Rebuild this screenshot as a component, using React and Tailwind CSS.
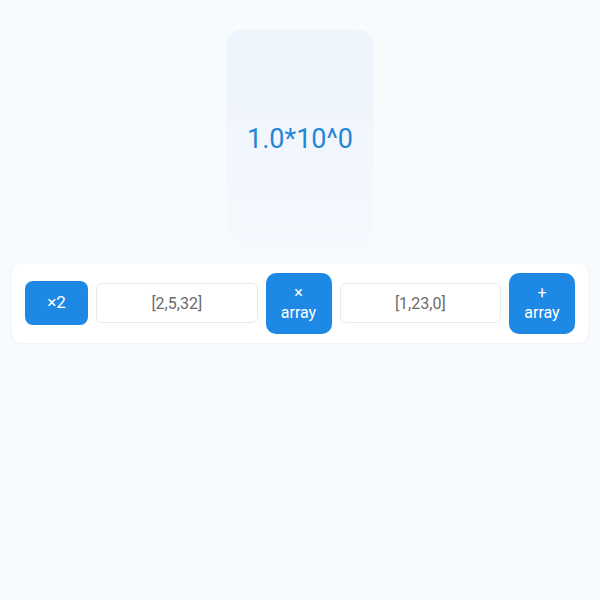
import React from 'react';

const font = { fontFamily: 'Roboto, "Liberation Sans", sans-serif' };

const ActionButton = ({ children, tall = false }) => (
  <button
    className={
      tall
        ? 'w-[66px] h-[61px] shrink-0 rounded-[10px] bg-[#1e88e5] text-white text-[16px] leading-[20px] flex flex-col items-center justify-center'
        : 'w-[63px] h-[44px] shrink-0 rounded-[8px] bg-[#1e88e5] text-white text-[17px] flex items-center justify-center'
    }
  >
    {children}
  </button>
);

const ArrayInput = ({ value }) => (
  <input
    readOnly
    value={value}
    className="flex-1 min-w-0 h-[40px] rounded-[6px] border border-[#e4ecf3] bg-white text-center text-[16px] text-[#6b6b6b] outline-none"
  />
);

export default function App() {
  return (
    <div className="min-h-[600px] w-full bg-[#f8fbfe] pt-[30px]" style={font}>
      {/* value card */}
      <div className="mx-auto w-[146px] h-[218px] rounded-[14px] bg-gradient-to-b from-[#edf4fc] to-[#f6f9fe] flex items-center justify-center">
        <span className="text-[27px] text-[#2586d6]">1.0*10^0</span>
      </div>

      {/* controls */}
      <div className="mx-[12px] mt-[15px] h-[80px] rounded-[10px] bg-white shadow-[0_1px_3px_rgba(30,60,100,0.05)] px-[13px] flex items-center gap-2">
        <ActionButton>×2</ActionButton>
        <ArrayInput value="[2,5,32]" />
        <ActionButton tall>
          <span>×</span>
          <span>array</span>
        </ActionButton>
        <ArrayInput value="[1,23,0]" />
        <ActionButton tall>
          <span>+</span>
          <span>array</span>
        </ActionButton>
      </div>
    </div>
  );
}
